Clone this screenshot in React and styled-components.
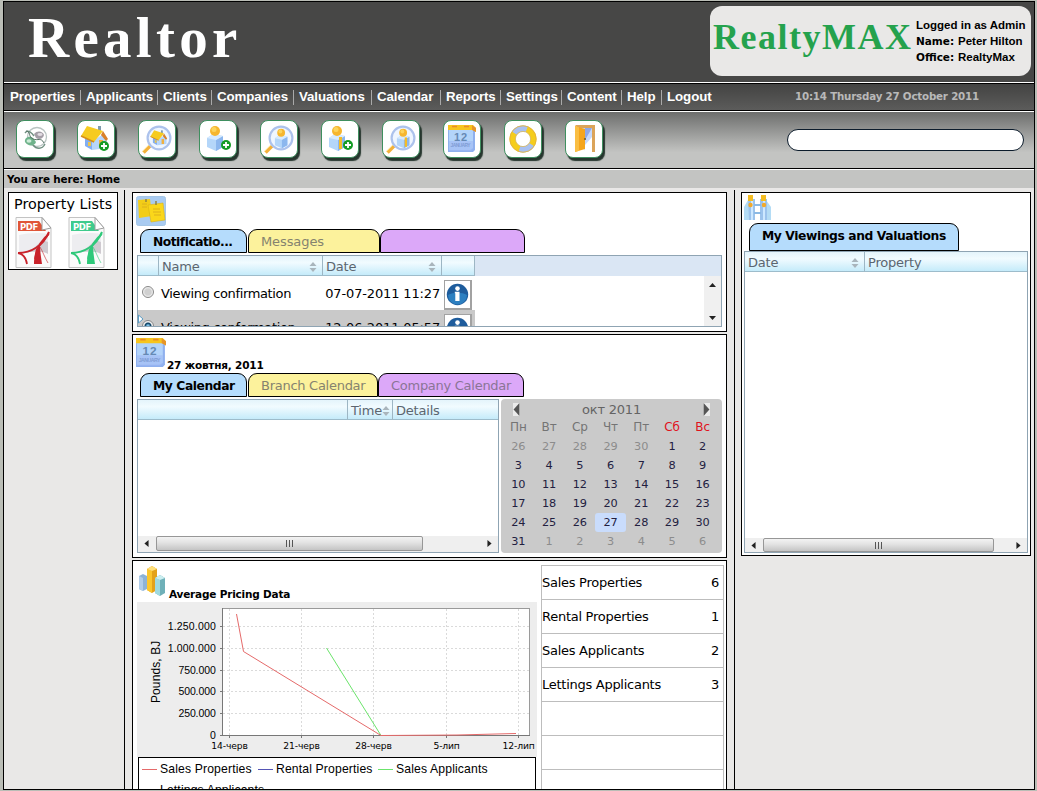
import React from "react";
import styled, { createGlobalStyle } from "styled-components";

const Global = createGlobalStyle`
  *, *::before, *::after { box-sizing: border-box; }
  body { margin: 0; background: #babdb6; overflow: hidden; }
  svg { display: block; flex: none; }
`;

const verdana = `Verdana, "DejaVu Sans", sans-serif`;
const arial = `Arial, "Liberation Sans", sans-serif`;

const Page = styled.div`
  height: 791px;
  padding: 1px 0 0 3px;
  font-family: ${verdana};
  font-size: 13px;
  letter-spacing: -0.27px;
  color: #000;
`;
const Frame = styled.div`
  width: 1032px;
  height: 789px;
  border: 1px solid #000;
  background: #e9e8e7;
  display: flex;
  flex-direction: column;
  overflow: hidden;
`;
const Text = styled.span`
  display: block;
  white-space: pre;
  flex: none;
  letter-spacing: ${(p) => p.$ls || 0}px;
`;

/* ---------- header ---------- */
const Header = styled.header`
  flex: none;
  height: 81px;
  background: #474746;
  border-bottom: 1px solid #fff;
  display: flex;
  justify-content: space-between;
  padding: 4px 3px 0 24px;
`;
const Brand = styled.h1`
  margin: 0;
  font: bold 57px/64px "Liberation Serif", serif;
  letter-spacing: 4.3px;
  color: #fff;
`;
const UserCard = styled.div`
  width: 321px;
  height: 70px;
  border-radius: 12px;
  background: #e9e8e7;
  display: flex;
  padding: 0 0 0 3px;
`;
const Agency = styled.div`
  width: 203px;
  font: bold 36px/62px "Liberation Serif", serif;
  letter-spacing: 1.5px;
  color: #25a24d;
`;
const UserLines = styled.div`
  padding-top: 11px;
  font: bold 11.5px/16px ${arial};
  letter-spacing: 0;
`;
const UserLine = styled.div`
  display: flex;
  white-space: pre;
`;
const UserLabel = styled.span`
  width: ${(p) => p.$w}px;
  font: bold 10.5px/16px ${verdana};
`;

/* ---------- navigation ---------- */
const Nav = styled.nav`
  flex: none;
  height: 28px;
  border-top: 1px solid #000;
  border-bottom: 1px solid #000;
  background: linear-gradient(#434342, #5c5c5b);
  display: flex;
  align-items: center;
  padding-left: 1px;
`;
const NavItem = styled.a`
  width: ${(p) => p.$w}px;
  padding-left: 5px;
  height: 15px;
  border-right: ${(p) => (p.$last ? "0" : "1px solid #a9a9a9")};
  font: bold 13.3px/13px ${arial};
  letter-spacing: -0.08px;
  color: #fff;
  white-space: nowrap;
`;
const Clock = styled.div`
  margin-left: auto;
  width: 239px;
  font-weight: bold;
  font-size: 10.3px;
  letter-spacing: -0.2px;
  line-height: 15px;
  padding-bottom: 1px;
  color: #b9b9b9;
  white-space: nowrap;
`;

/* ---------- toolbar ---------- */
const Toolbar = styled.div`
  flex: none;
  height: 58px;
  border-top: 1px solid #fff;
  border-bottom: 1px solid #000;
  background: linear-gradient(#6d6e6d, #c3c4c2 72%);
  display: flex;
  gap: 23px;
  padding: 8px 10px 0 12px;
`;
const ToolButton = styled.button`
  width: 38px;
  height: 38px;
  padding: 0;
  border: 1px solid #3f8f5f;
  border-radius: 8px;
  background: #fff;
  box-shadow: 2px 3px 1px #26362e;
  display: flex;
  align-items: center;
  justify-content: center;
`;
const Search = styled.input`
  width: 237px;
  height: 22px;
  margin: 9px 0 0 auto;
  border: 1px solid #0c1c2c;
  border-radius: 11px;
  background: #fff;
`;
const Crumb = styled.div`
  flex: none;
  height: 19px;
  border-top: 1px solid #fff;
  background: #c3c4c2;
  padding: 1px 0 0 3px;
  font: bold 10.4px/17px ${verdana};
  letter-spacing: -0.15px;
`;

/* ---------- columns ---------- */
const Body = styled.main`
  flex: 1;
  min-height: 0;
  display: flex;
  padding-top: 2px;
`;
const Column = styled.section`
  width: ${(p) => p.$w}px;
  flex: none;
  padding: 2px 0 0 ${(p) => p.$pad}px;
  border-right: ${(p) => (p.$line ? "1px solid #000" : "0")};
  display: flex;
  flex-direction: column;
  gap: 2px;
`;
const Panel = styled.div`
  flex: none;
  width: ${(p) => p.$w}px;
  height: ${(p) => p.$h}px;
  border: 1px solid #000;
  background: #fff;
  padding: ${(p) => p.$p || "3px 4px 0"};
`;
const PropertyTitle = styled.div`
  font-size: 14.3px;
  letter-spacing: 0.05px;
  line-height: 22px;
  padding-left: 5px;
  white-space: nowrap;
`;
const PdfRow = styled.div`
  display: flex;
  gap: 16px;
  padding: 2px 0 0 6px;
`;

/* ---------- tabs ---------- */
const IconRow = styled.div`
  height: ${(p) => p.$h}px;
  display: flex;
  align-items: flex-start;
  gap: ${(p) => p.$gap || 0}px;
  margin-left: -1px;
`;
const IconTitle = styled.div`
  font: bold 10.5px/14px ${verdana};
  padding-top: ${(p) => p.$top}px;
  letter-spacing: -0.2px;
  white-space: nowrap;
`;
const Tabs = styled.div`
  display: flex;
  margin-left: ${(p) => p.$x || 3}px;
  margin-bottom: ${(p) => p.$gap}px;
`;
const tabColors = { blue: "#b5dcfc", yellow: "#fcf29c", purple: "#dca8f9" };
const Tab = styled.div`
  width: ${(p) => p.$w}px;
  height: ${(p) => p.$h || 24}px;
  border: 1px solid #000;
  border-right-width: ${(p) => (p.$tone === "blue" ? 1 : 1.5)}px;
  border-radius: 9px 9px 0 0;
  background: ${(p) => tabColors[p.$tone]};
  padding-left: 12px;
  margin-right: ${(p) => p.$mr || 0}px;
  font-weight: ${(p) => (p.$active ? "bold" : "normal")};
  font-size: ${(p) => (p.$active ? 12.3 : 13)}px;
  line-height: 24px;
  letter-spacing: ${(p) => p.$ls ?? -0.27}px;
  color: ${(p) => (p.$active ? "#000" : p.$tone === "purple" ? "#8a7596" : "#85836f")};
  white-space: nowrap;
`;

/* ---------- data grids ---------- */
const Grid = styled.div`
  width: ${(p) => p.$w}px;
  height: ${(p) => p.$h}px;
  border: 1px solid #8fa4b3;
  background: #fff;
  display: flex;
  flex-direction: column;
  overflow: hidden;
`;
const HeadRow = styled.div`
  flex: none;
  display: flex;
  height: 20px;
  background: #dae6f4;
`;
const HeadCell = styled.div`
  ${(p) => (p.$w ? `width: ${p.$w}px;` : "flex: 1;")}
  display: flex;
  align-items: center;
  justify-content: space-between;
  padding: 2px ${(p) => p.$pr ?? 5}px 0 ${(p) => p.$pl ?? 3}px;
  border-right: ${(p) => (p.$last ? "0" : "1px solid #9db6c4")};
  border-bottom: 1px solid #9dbccb;
  background: linear-gradient(#e4f4fb, #f1fbff 35%, #c5ebfa);
  color: #5b6670;
  line-height: 17px;
  letter-spacing: -0.2px;
`;
const GridBody = styled.div`
  flex: 1;
  min-height: 0;
  display: flex;
  justify-content: space-between;
`;
const Rows = styled.div`
  width: 337px;
`;
const Row = styled.div`
  position: relative;
  height: 34px;
  display: flex;
  align-items: center;
  padding-right: 3px;
  background: ${(p) => (p.$selected ? "#c9c9c9" : "#fff")};
`;
const Radio = styled.span`
  width: 12px;
  height: 12px;
  margin: 0 7px 2px 4px;
  border: 1px solid #878787;
  border-radius: 50%;
  background: ${(p) =>
    p.$on
      ? "radial-gradient(circle, #7ec4ea 0 1px, #174a6c 2.5px 3px, #f0f0f0 4px)"
      : "radial-gradient(circle, #d0d0d0 0 3px, #f4f4f4 5px)"};
`;
const DateText = styled(Text)`
  margin-left: auto;
`;
const InfoButton = styled.span`
  width: 28px;
  height: 30px;
  margin: 3px 0 0 4px;
  border: 2px solid #a2a2a2;
  border-width: 1px 2px 2px 1px;
  background: #fff;
  display: flex;
  align-items: center;
  justify-content: center;
`;
const Marker = styled.svg`
  position: absolute;
  left: 0;
  top: 4px;
`;
const VScroll = styled.div`
  width: 17px;
  background: #f0f0f0;
  display: flex;
  flex-direction: column;
  align-items: center;
  justify-content: space-between;
  padding: 7px 0 6px;
`;
const HScroll = styled.div`
  flex: none;
  height: ${(p) => p.$h}px;
  background: #efefef;
  display: flex;
  align-items: center;
  padding: 0 6px ${(p) => p.$pb}px;
`;
const Thumb = styled.div`
  width: ${(p) => p.$w}px;
  height: 100%;
  margin: 0 auto 0 7px;
  border: 1px solid #979797;
  border-radius: 2px;
  background: linear-gradient(#f3f3f3, #e2e2e2 45%, #c4c4c4);
  display: flex;
  align-items: center;
  justify-content: center;
`;
const Side = styled.div`
  display: flex;
  gap: ${(p) => p.$gap || 0}px;
`;

/* ---------- date picker ---------- */
const Picker = styled.div`
  width: 221px;
  height: 154px;
  border-radius: 4px;
  background: #cacaca;
  padding: 2px 4px 0 2px;
`;
const MonthBar = styled.div`
  height: 17px;
  display: flex;
  align-items: center;
  justify-content: space-between;
  padding: 0 8px 0 10px;
  color: #646464;
  letter-spacing: -0.2px;
`;
const MonthArrow = styled.span`
  background: #ebebeb;
`;
const Days = styled.div`
  display: grid;
  grid-template-columns: repeat(7, 1fr);
  grid-auto-rows: 19px;
  font-size: ${(p) => p.$size || 11.3}px;
  line-height: 19px;
  letter-spacing: -0.1px;
  text-align: center;
`;
const Day = styled.span`
  border-radius: 3px;
  color: ${(p) => p.$c};
  background: ${(p) => (p.$today ? "#c9dcfc" : "transparent")};
`;

/* ---------- pricing ---------- */
const ChartColumn = styled.div`
  flex: none;
  width: 400px;
`;
const ChartHeading = styled.div`
  height: 41px;
  display: flex;
  gap: 3px;
  padding: 4px 0 0 1px;
`;
const Legend = styled.div`
  width: 398px;
  height: 50px;
  margin-left: 1px;
  border: 1px solid #000;
  background: #fff;
  font: 12.2px/21px ${arial};
  display: grid;
  grid-template-columns: 116px 120px 1fr;
  align-content: start;
  padding: 1px 3px;
`;
const LegendItem = styled.span`
  display: flex;
  align-items: flex-start;
  gap: 3px;
  white-space: nowrap;
  letter-spacing: 0.14px;
  &::before {
    content: "";
    flex: none;
    width: 15px;
    height: 1px;
    margin-top: 10px;
    background: ${(p) => p.$c};
  }
`;
const Stats = styled.div`
  width: 183px;
  margin-top: 4px;
  border: 1px solid #bdbdbd;
`;
const Stat = styled.div`
  height: 34px;
  border-bottom: 1px solid #bdbdbd;
  display: flex;
  justify-content: space-between;
  line-height: 34px;
  padding-right: 4px;
`;

/* ---------- drawings ---------- */
const House = () => (
  <g>
    <path d="M5 14 12 18V27L5 23Z" fill="#82aef2" />
    <path d="M12 18 22 12 27 17V25L12 27Z" fill="#b7d6fb" />
    <path d="M18 3h3v6h-3z" fill="#7f9aae" />
    <path d="M1 13 7 3 23 8 14 19Z" fill="#f6cb20" />
    <path d="M1 13 14 19" stroke="#d78e1a" strokeWidth="1.5" />
    <path d="M23 8 28 16 26 18 21 12Z" fill="#d9812a" />
    <path d="M8 19h3v4H8z" fill="#eec64a" />
    <path d="M19 17h4v8h-4z" fill="#f0b040" />
  </g>
);
const Person = ({ tie }) => (
  <g>
    <path d="M5 15 11 11 21 13V24L14 28 5 24Z" fill="#b4d6f9" />
    <path d="M14 17 21 13V24L14 28Z" fill="#8cb7ee" />
    <path d="M5 15 11 11 21 13 14 17Z" fill="#d7ebff" />
    {tie && <path d="M15 14h3v12h-3z" fill="#f3bc28" />}
    <circle cx="13" cy="8" r="5" fill="#f6b62e" />
    <circle cx="12" cy="6.5" r="2.5" fill="#fcd45c" />
  </g>
);
const Plus = () => (
  <g>
    <circle cx="24" cy="22" r="5" fill="#149b25" />
    <path d="M21 22h6M24 19v6" stroke="#fff" strokeWidth="1.8" />
  </g>
);
const Lens = ({ x, y, s, children }) => (
  <g>
    <path d="m2.500 29.500 6.500-6.500" stroke="#f3b13a" strokeWidth="3.600" />
    <path d="m2 28 6-6" stroke="#fbdc85" strokeWidth="1" />
    <circle cx="18" cy="15" r="11" fill="#eff6ff" />
    <g transform={`translate(${x} ${y}) scale(${s})`}>{children}</g>
    <circle cx="18" cy="15" r="11.400" fill="none" stroke="#acc2ec" strokeWidth="2.200" />
  </g>
);
const CalendarArt = () => (
  <g>
    <path d="M2 6h27v21l-2 2H2z" fill="#8fb0ee" />
    <path d="M3 6h24v19l-3 2H3z" fill="#b3d4fa" />
    <path d="M3 18h24v8l-2 2H3z" fill="#9fb8f3" opacity=".6" />
    <path d="M2 2h25l3 3v4l-3-2H2z" fill="#f7c51d" />
    <path d="M26 2l4 3v4l-4-2z" fill="#e6952a" />
    <path d="M6 3.500h5M18 3.500h5" stroke="#ea8b28" strokeWidth="1.500" />
    <text x="8" y="17.500" fontSize="11" fontWeight="bold" fontFamily="Liberation Sans" fill="#6589b4" textLength="13">12</text>
    <text x="4.500" y="24" fontSize="4.800" fontWeight="bold" fontFamily="Liberation Sans" fill="#7f9cd4" textLength="20">JANUARY</text>
  </g>
);
const toolIcons = [
  <g fill="none">
    <circle cx="18" cy="14" r="9.500" stroke="#b9c4c2" strokeWidth="1.300" />
    <path d="M6 10c3-4 7 0 9 3m11 8c-3 6-9 5-12 1" stroke="#6f8f80" strokeWidth="1.400" />
    <path d="M6 19c-1-4 4-7 8-4l3 4c-1 4-8 5-11 0z" fill="#6fb38b" />
    <ellipse cx="10" cy="18" rx="2.500" ry="1.800" fill="#cdebd7" />
    <path d="M15 11c3-4 9-3 10 1-1 4-5 5-8 3z" fill="#a49ea7" />
    <ellipse cx="21" cy="11.500" rx="2.600" ry="1.400" fill="#e2dce3" />
    <path d="M7 8c5 0 2 6 7 8s8-2 11 4" stroke="#526f62" />
  </g>,
  <g><House /><g transform="translate(0 1)"><Plus /></g></g>,
  <Lens x={8.8} y={5.5} s={0.62}><House /></Lens>,
  <g><Person /><Plus /></g>,
  <Lens x={8} y={3.5} s={0.78}><Person /></Lens>,
  <g><Person tie /><Plus /></g>,
  <Lens x={8} y={3.5} s={0.78}><Person tie /></Lens>,
  <CalendarArt />,
  <g fill="none" strokeWidth="6">
    <circle cx="16" cy="16" r="10.500" stroke="#f5cd1c" />
    <circle cx="16" cy="16" r="10.500" stroke="#a9c1f0" strokeDasharray="14 19" strokeDashoffset="-6" />
    <circle cx="16" cy="16" r="13.200" stroke="#dfad42" strokeWidth=".8" />
    <circle cx="16" cy="16" r="7.600" stroke="#d4b76c" strokeWidth=".8" />
  </g>,
  <g>
    <path d="M7 2h20v27h-3V5H10z" fill="#dba45a" />
    <path d="M10 5h14v15l-7 8z" fill="#c6d9fc" />
    <path d="M17 5h7l-7 12z" fill="#8ea8e8" />
    <path d="M17 28V22l7-8v15z" fill="#fff" />
    <path d="M7 3l10 3v20l-10 3z" fill="#f5a51c" />
    <path d="M7 3l4 1.300V27.700L7 29z" fill="#fabe43" />
    <circle cx="17" cy="16" r="1.100" fill="#75602e" />
  </g>,
];
const ToolIcon = ({ children }) => (
  <svg width="32" height="32" viewBox="0 0 32 32">{children}</svg>
);
const Pdf = ({ c, light }) => (
  <svg width="37" height="51" viewBox="0 0 37 51">
    <path d="M1 .5H27L36 11V50.500H1Z" fill="#fbfbfb" stroke="#c3c3c3" />
    <path d="M4 18c8-2 20-3 29-1v18H4z" fill="#ededf0" />
    <path d="M4 37c10-1 18-8 23-14l6 2v12c-8-5-22-1-29 0z" fill="#cfcad0" />
    <path d="M3 4H24L31 14H3Z" fill={light} />
    <path d="M27 .5 36 11 27 13Z" fill="#fff" stroke="#9c9c9c" />
    <text x="5" y="12.500" fontSize="8.500" fontWeight="bold" fontFamily="DejaVu Sans" fill="#fff" textLength="18">PDF</text>
    <g fill="none" stroke={c}>
      <path d="M3 36c13 0 25-7 31-21" strokeWidth="2" />
      <path d="M3 36c6 1 8 5 9 11" strokeWidth="1.800" />
      <path d="M34 17c-7 5-12 13-14 25" strokeWidth="1.600" />
      <path d="M25 30c3 5 4 9 8 16" strokeWidth="1" opacity=".6" />
    </g>
    <path d="M21 32l4-3c0 5 1 11 2 18h-8c0-6 1-11 2-15z" fill={c} />
  </svg>
);
const Notes = () => (
  <svg width="31" height="31" viewBox="0 0 31 31">
    <rect x=".5" y=".5" width="29" height="29" rx="2" fill="#a9cbf1" stroke="#a5c6e6" />
    <path d="M2 4 14 3 16 20 3 22Z" fill="#f3cd18" />
    <path d="M12 9 27 7 29 24 15 26Z" fill="#fad71a" stroke="#dcb216" strokeWidth=".6" />
    <path d="M17 13h7M17 16h8M18 19h7M6 8h5M6 11h5" stroke="#dcb01c" />
    <path d="M20 5v4M10 3v3" stroke="#8f8240" strokeWidth="1.500" />
  </svg>
);
const Binoculars = () => (
  <svg width="30" height="30" viewBox="0 0 30 30">
    <path d="M5 7 1 14V27H7V10Z" fill="#b4dcf5" />
    <path d="M23 7 28 14V27H22V10Z" fill="#b4dcf5" />
    <path d="M5 6h7v21H6z" fill="#9cc3ec" />
    <path d="M17 6h7v21h-7z" fill="#9cc3ec" />
    <path d="M8 8h2v19H8zM20 8h2v19h-2z" fill="#cde8ff" />
    <path d="M11 12h7M11 20h7" stroke="#8bb9e4" strokeWidth="2" />
    <path d="M5 2h5v6H5zM18 2h5v6h-5z" fill="#f3bc22" />
    <circle cx="7.500" cy="12" r="2.200" fill="#f2a92b" />
    <circle cx="21" cy="12" r="2.200" fill="#f2a92b" />
  </svg>
);
const Bars = () => (
  <svg width="28" height="32" viewBox="0 0 28 32">
    <path d="M1 11 5 9 9 11V24L5 26 1 24Z" fill="#8db3d7" />
    <path d="M1 11 5 13V26L1 24Z" fill="#b0cdea" />
    <path d="M9 4 14 1 19 4V25L14 28 9 25Z" fill="#e3a21b" />
    <path d="M9 4 14 6V28L9 25Z" fill="#fbc62d" />
    <path d="M9 4 14 1 19 4 14 6Z" fill="#ffe07a" />
    <path d="M17 13 22 10 27 13V28L22 31 17 28Z" fill="#6fb0b8" />
    <path d="M17 13 22 15V31L17 28Z" fill="#9fdae0" />
    <path d="M17 13 22 10 27 13 22 15Z" fill="#cbeef0" />
  </svg>
);
const Sorter = () => (
  <svg width="8" height="10" viewBox="0 0 8 10">
    <path d="M4 0 7.500 4H.5zM4 10 .5 6h7z" fill="#a9b5bc" />
  </svg>
);
const Arrow = ({ d, w = 6, h = 8, c = "#222" }) => (
  <svg width={w} height={h} viewBox="0 0 6 8" preserveAspectRatio="none">
    <path d={d} fill={c} />
  </svg>
);
const LEFT = "M5.500 0V8L.5 4z";
const RIGHT = "M.5 0V8L5.500 4z";
const Info = () => (
  <svg width="23" height="23" viewBox="0 0 23 23">
    <circle cx="11.500" cy="11.500" r="10.700" fill="#1e5c9c" />
    <path d="M2 12a9.500 9.500 0 0 0 19 0c-5-3-14-3-19 0z" fill="#2c7fc0" />
    <circle cx="11.500" cy="5.600" r="2.300" fill="#fff" />
    <path d="M8.800 8.800h4.700V18h-4.200v-7.800h-.5z" fill="#fff" />
  </svg>
);
const HBar = ({ thumb, h, pb = 1 }) => (
  <HScroll $h={h} $pb={pb}>
    <Arrow d={LEFT} w={5} h={7} />
    <Thumb $w={thumb}>
      <svg width="8" height="7"><path d="M.5 0v7M3.500 0v7M6.500 0v7" stroke="#555" /></svg>
    </Thumb>
    <Arrow d={RIGHT} w={5} h={7} />
  </HScroll>
);

const yTicks = [["1.250.000", 24.5], ["1.000.000", 46.5], ["750.000", 68.5], ["500.000", 89.5], ["250.000", 111.5], ["0", 133.5]];
const xTicks = [["14-черв", 92.5], ["21-черв", 164.5], ["28-черв", 236.5], ["5-лип", 309.5], ["12-лип", 381.5]];
const Chart = () => (
  <svg width="400" height="155" viewBox="0 0 400 155">
    <rect width="400" height="155" fill="#ededed" />
    <rect x="85.500" y="6.500" width="307" height="127" fill="#fff" stroke="#9a9a9a" />
    {yTicks.map(([t, y]) => (
      <g key={t}>
        <path d={`M86 ${y}H392`} stroke="#dadada" strokeDasharray="2 2" />
        <path d={`M83 ${y}h3`} stroke="#777" />
        <text x="78.500" y={y + 3.5} textAnchor="end" fontFamily="Liberation Sans" fontSize="10.500" textLength={t === "0" ? 6 : t.length * 5.3}>{t}</text>
      </g>
    ))}
    {xTicks.map(([t, x]) => (
      <g key={t}>
        <path d={`M${x} 7V133`} stroke="#dadada" strokeDasharray="2 2" />
        <path d={`M${x} 134v2`} stroke="#777" />
        <text x={x} y="147" textAnchor="middle" fontFamily="DejaVu Sans" fontSize="9.200" textLength={t === "12-лип" ? 32 : t.length * 5.2}>{t}</text>
      </g>
    ))}
    <path d="M85.500 6V133.500H393" fill="none" stroke="#777" />
    <text transform="translate(23 70) rotate(-90)" textAnchor="middle" fontFamily="Liberation Sans" fontSize="12" textLength="62">Pounds, BJ</text>
    <path d="M189.500 46 244 133.500" stroke="#6be46b" fill="none" />
    <path d="M99.500 12 106.500 49.500 244 133.500 320 133 379 131.500" stroke="#e56a6a" fill="none" />
  </svg>
);

const nav = [["Properties", 76], ["Applicants", 77], ["Clients", 54], ["Companies", 82], ["Valuations", 78], ["Calendar", 69], ["Reports", 60], ["Settings", 61], ["Content", 60], ["Help", 40], ["Logout", 60]];
const days = [26, 27, 28, 29, 30, ...Array.from({ length: 31 }, (_, i) => i + 1), 1, 2, 3, 4, 5, 6];
const stats = [["Sales Properties", 6], ["Rental Properties", 1], ["Sales Applicants", 2], ["Lettings Applicants", 3], ["", ""], ["", ""], ["", ""]];
const notices = [["Viewing confirmation", "07-07-2011 11:27"], ["Viewing conformation", "12-06-2011 05:57"]];

export default function App() {
  return (
    <Page>
      <Global />
      <Frame>
        <Header>
          <Brand>Realtor</Brand>
          <UserCard>
            <Agency>RealtyMAX</Agency>
            <UserLines>
              <UserLine>Logged in as Admin</UserLine>
              <UserLine><UserLabel $w={42}>Name:</UserLabel>Peter Hilton</UserLine>
              <UserLine><UserLabel $w={42}>Office:</UserLabel>RealtyMax</UserLine>
            </UserLines>
          </UserCard>
        </Header>
        <Nav>
          {nav.map(([t, w], i) => (
            <NavItem key={t} $w={w} $last={i === nav.length - 1}>{t}</NavItem>
          ))}
          <Clock>10:14 Thursday 27 October 2011</Clock>
        </Nav>
        <Toolbar>
          {toolIcons.map((icon, i) => (
            <ToolButton key={i}><ToolIcon>{icon}</ToolIcon></ToolButton>
          ))}
          <Search />
        </Toolbar>
        <Crumb>You are here: Home</Crumb>
        <Body>
          <Column $w={121} $pad={4} $line>
            <Panel $w={110} $h={78} $p="0">
              <PropertyTitle>Property Lists</PropertyTitle>
              <PdfRow>
                <Pdf c="#c9232b" light="#e05538" />
                <Pdf c="#2fc97a" light="#3fcb8d" />
              </PdfRow>
            </Panel>
          </Column>
          <Column $w={610} $pad={7} $line>
            <Panel $w={595} $h={140}>
              <IconRow $h={33}><Notes /></IconRow>
              <Tabs $gap={2}>
                <Tab $w={107} $mr={1} $tone="blue" $active $ls={-0.5}>Notificatio...</Tab>
                <Tab $w={132} $tone="yellow" $ls={-0.1}>Messages</Tab>
                <Tab $w={145} $tone="purple" />
              </Tabs>
              <Grid $w={585} $h={72}>
                <HeadRow>
                  <HeadCell $w={21} />
                  <HeadCell $w={164}>Name<Sorter /></HeadCell>
                  <HeadCell $w={119}>Date<Sorter /></HeadCell>
                  <HeadCell $w={33} />
                </HeadRow>
                <GridBody>
                  <Rows>
                    {notices.map(([name, date], i) => (
                      <Row key={name} $selected={i === 1}>
                        {i === 1 && (
                          <Marker width="6" height="10"><path d="M.5 1 5 5 .5 9Z" fill="#fff" stroke="#5c9cc4" /></Marker>
                        )}
                        <Radio $on={i === 1} />
                        <Text $ls={-0.36}>{name}</Text>
                        <DateText $ls={-0.15}>{date}</DateText>
                        <InfoButton><Info /></InfoButton>
                      </Row>
                    ))}
                  </Rows>
                  <VScroll>
                    <Arrow d="M3 0 6 8H0z" w={7} h={4} />
                    <Arrow d="M0 0H6L3 8z" w={7} h={4} />
                  </VScroll>
                </GridBody>
              </Grid>
            </Panel>
            <Panel $w={595} $h={224}>
              <IconRow $h={35} $gap={1}>
                <svg width="30" height="30" viewBox="2 2 28 28"><CalendarArt /></svg>
                <IconTitle $top={20}>27 жовтня, 2011</IconTitle>
              </IconRow>
              <Tabs $gap={2}>
                <Tab $w={107} $mr={1} $tone="blue" $active $ls={-0.42}>My Calendar</Tab>
                <Tab $w={130} $tone="yellow">Branch Calendar</Tab>
                <Tab $w={146} $tone="purple">Company Calendar</Tab>
              </Tabs>
              <Side $gap={2}>
                <Grid $w={362} $h={154}>
                  <HeadRow>
                    <HeadCell $w={210} />
                    <HeadCell $w={45} $pr={3}>Time<Sorter /></HeadCell>
                    <HeadCell $last>Details</HeadCell>
                  </HeadRow>
                  <GridBody />
                  <HBar h={16} thumb={267} />
                </Grid>
                <Picker>
                  <MonthBar>
                    <MonthArrow><Arrow d={LEFT} w={7} h={13} c="#555" /></MonthArrow>
                    окт 2011
                    <MonthArrow><Arrow d={RIGHT} w={7} h={13} c="#555" /></MonthArrow>
                  </MonthBar>
                  <Days $size={12}>
                    {["Пн", "Вт", "Ср", "Чт", "Пт", "Сб", "Вс"].map((d, i) => (
                      <Day key={d} $c={i > 4 ? "#e0121c" : "#747474"}>{d}</Day>
                    ))}
                  </Days>
                  <Days>
                    {days.map((d, i) => (
                      <Day key={i} $today={i === 31} $c={i < 5 || i > 35 ? "#8c8c8c" : "#22203f"}>{d}</Day>
                    ))}
                  </Days>
                </Picker>
              </Side>
            </Panel>
            <Panel $w={595} $h={260} $p="0 0 0 4px">
              <Side $gap={4}>
                <ChartColumn>
                  <ChartHeading>
                    <Bars />
                    <IconTitle $top={22}>Average Pricing Data</IconTitle>
                  </ChartHeading>
                  <Chart />
                  <Legend>
                    <LegendItem $c="#e56a6a">Sales Properties</LegendItem>
                    <LegendItem $c="#5555b5">Rental Properties</LegendItem>
                    <LegendItem $c="#6be46b">Sales Applicants</LegendItem>
                    <LegendItem $c="transparent">Lettings Applicants</LegendItem>
                  </Legend>
                </ChartColumn>
                <Stats>
                  {stats.map(([label, n], i) => (
                    <Stat key={i}><span>{label}</span><span>{n}</span></Stat>
                  ))}
                </Stats>
              </Side>
            </Panel>
          </Column>
          <Column $w={296} $pad={6}>
            <Panel $w={290} $h={364} $p="0 2px">
              <IconRow $h={30}><Binoculars /></IconRow>
              <Tabs $x={5} $gap={0}>
                <Tab $w={210} $h={28} $tone="blue" $active $ls={-0.4}>My Viewings and Valuations</Tab>
              </Tabs>
              <Grid $w={284} $h={302}>
                <HeadRow>
                  <HeadCell $w={120}>Date<Sorter /></HeadCell>
                  <HeadCell $last>Property</HeadCell>
                </HeadRow>
                <GridBody />
                <HBar h={14} thumb={231} pb={0} />
              </Grid>
            </Panel>
          </Column>
        </Body>
      </Frame>
    </Page>
  );
}
